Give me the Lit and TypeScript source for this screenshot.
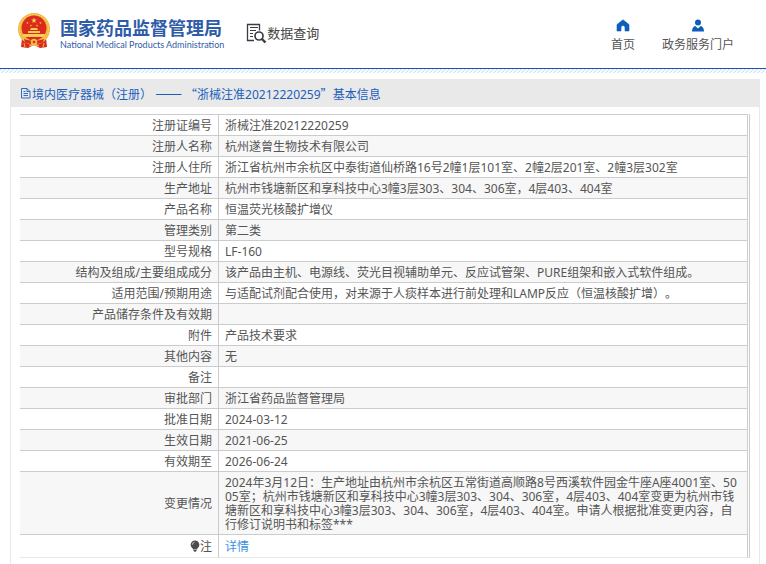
import { LitElement, html, css, svg } from "lit";
import { customElement } from "lit/decorators.js";

interface Row {
  label: string;
  value: string;
}

const rows: Row[] = [
  { label: "注册证编号", value: "浙械注准20212220259" },
  { label: "注册人名称", value: "杭州遂曾生物技术有限公司" },
  { label: "注册人住所", value: "浙江省杭州市余杭区中泰街道仙桥路16号2幢1层101室、2幢2层201室、2幢3层302室" },
  { label: "生产地址", value: "杭州市钱塘新区和享科技中心3幢3层303、304、306室，4层403、404室" },
  { label: "产品名称", value: "恒温荧光核酸扩增仪" },
  { label: "管理类别", value: "第二类" },
  { label: "型号规格", value: "LF-160" },
  { label: "结构及组成/主要组成成分", value: "该产品由主机、电源线、荧光目视辅助单元、反应试管架、PURE组架和嵌入式软件组成。" },
  { label: "适用范围/预期用途", value: "与适配试剂配合使用，对来源于人痰样本进行前处理和LAMP反应（恒温核酸扩增）。" },
  { label: "产品储存条件及有效期", value: "" },
  { label: "附件", value: "产品技术要求" },
  { label: "其他内容", value: "无" },
  { label: "备注", value: "" },
  { label: "审批部门", value: "浙江省药品监督管理局" },
  { label: "批准日期", value: "2024-03-12" },
  { label: "生效日期", value: "2021-06-25" },
  { label: "有效期至", value: "2026-06-24" },
  {
    label: "变更情况",
    value:
      "2024年3月12日：生产地址由杭州市余杭区五常街道高顺路8号西溪软件园金牛座A座4001室、5005室；杭州市钱塘新区和享科技中心3幢3层303、304、306室，4层403、404室变更为杭州市钱塘新区和享科技中心3幢3层303、304、306室，4层403、404室。申请人根据批准变更内容，自行修订说明书和标签***",
  },
];

const star = (cx: number, cy: number, r: number) => {
  const points = Array.from({ length: 10 }, (_, i) => {
    const radius = i % 2 ? r * 0.4 : r;
    const a = (Math.PI / 5) * i - Math.PI / 2;
    return `${(cx + radius * Math.cos(a)).toFixed(2)},${(cy + radius * Math.sin(a)).toFixed(2)}`;
  }).join(" ");
  return svg`<polygon points=${points} fill="#f7d154"/>`;
};

@customElement("app-root")
export class AppRoot extends LitElement {
  static styles = css`
    :host {
      display: block;
      background: #fff;
      color: #555;
      font: 12px/14px "Noto Sans", "Noto Sans CJK SC", sans-serif;
      text-spacing-trim: space-all;
    }
    a {
      color: inherit;
      text-decoration: none;
    }
    svg {
      display: block;
      flex: none;
    }
    .header {
      display: flex;
      align-items: flex-start;
      height: 68px;
      padding: 0 32px 0 17px;
      box-sizing: border-box;
    }
    .brand {
      display: flex;
      gap: 9px;
      padding-top: 12px;
    }
    .names {
      padding-top: 2px;
      color: #2f5ca8;
      white-space: nowrap;
    }
    .cn {
      font: 700 18px/26px "Noto Sans CJK SC", sans-serif;
    }
    .en {
      font: 9px/10px Lato, "Liberation Sans", sans-serif;
    }
    .query {
      display: flex;
      align-items: center;
      margin: 0 0 0 20px;
      padding-top: 22px;
      color: #444;
      font: 400 13px/20px "Noto Sans CJK SC", sans-serif;
      white-space: nowrap;
    }
    .menu {
      display: flex;
      gap: 27px;
      margin-left: auto;
      padding-top: 19px;
    }
    .menu a {
      display: flex;
      flex-direction: column;
      align-items: center;
      gap: 6px;
      white-space: nowrap;
    }
    .rule {
      height: 4px;
      border-top: 1px solid #1c56a5;
      background: linear-gradient(135deg, #dbe9f4 25%, #fff 25% 50%, #dbe9f4 50% 75%, #fff 75%) 0 0 / 4px 4px;
    }
    .panel {
      margin: 6px 6px 0 10px;
      padding-bottom: 6px;
      border: solid #e8e8e8;
      border-width: 0 1px;
    }
    .title {
      display: flex;
      align-items: center;
      gap: 1px;
      margin: 0;
      height: 28px;
      padding-left: 10px;
      background: #e9e9e9;
      color: #1b5fbd;
      font-weight: 400;
      font-size: 12px;
    }
    .wide {
      font-family: "Noto Sans CJK SC", sans-serif;
    }
    .dash {
      font: 16px/14px "Noto Sans CJK SC", sans-serif;
    }
    .sheet {
      margin: 7px 9px 0;
      padding-right: 1px;
      border-right: 1px solid #ccc;
    }
    table {
      width: 100%;
      border-spacing: 0;
      border-top: 1px solid #ccc;
      border-right: 1px solid #ccc;
    }
    th,
    td {
      padding: 4px 6px 2px;
      border-bottom: 1px solid #ccc;
      text-align: left;
      font-weight: 400;
      height: 14px;
      word-break: break-all;
    }
    th {
      width: 186px;
      border-right: 1px solid #ccc;
      text-align: right;
    }
    tr:nth-child(even) {
      background: #f7f7f7;
    }
    .note th,
    .note td {
      height: 16px;
      border-bottom-color: #e8e8e8;
    }
    .note a {
      color: #3c8fe0;
    }
    .bulb {
      display: inline-block;
      vertical-align: -1px;
    }
  `;

  render() {
    return html`
      <header class="header">
        <a class="brand" href="#">
          <svg width="34" height="37" viewBox="0 0 34 37" aria-hidden="true">
            <path d="M5 26l-1 9 7 1 6-3 6 3 7-1-1-9z" fill="#d92c20" />
            <circle cx="17" cy="17" r="16" fill="#eeb33c" />
            <circle cx="17" cy="17" r="14.5" fill="none" stroke="#f8cf62" stroke-width="1.4" stroke-dasharray="2 1" />
            <circle cx="17" cy="16" r="12.4" fill="#dc2a1d" />
            ${star(17, 8.5, 3)}${star(10.5, 11, 1.3)}${star(23.5, 11, 1.3)}${star(14, 13.6, 1.3)}${star(20, 13.6, 1.3)}
            <path d="M13 18l1-2h6l1 2zM11 19h12v2H11zM6 22h22v3H6z" fill="#f7cd58" />
            <path d="M7 27c5 2 15 2 20 0l-1 3c-5 3-13 3-18 0z" fill="#d92c20" />
            <circle cx="17" cy="30" r="3.2" fill="#f2bd45" />
            <circle cx="17" cy="30" r="1.3" fill="#d92c20" />
            <path d="M7 31l1 4M27 31l-1 4M12 34l5-1 5 1" stroke="#f2bd45" fill="none" />
          </svg>
          <div class="names">
            <div class="cn">国家药品监督管理局</div>
            <div class="en">National Medical Products Administration</div>
          </div>
        </a>
        <h1 class="query">
          <svg width="23" height="21" viewBox="0 0 23 21" fill="none" stroke="#3b3b44" aria-hidden="true">
            <path d="M10 18.500H3.500v-16h12v6" stroke-width="1.300" />
            <path d="M6 5.500h8M6 8.500h6M6 11.500h3M6 14.500h3" />
            <circle cx="15" cy="14" r="4" stroke-width="1.700" />
            <path d="M18 17l3.500 3.500" stroke-width="2.400" />
          </svg>
          数据查询
        </h1>
        <nav class="menu">
          <a href="#">
            <svg width="14" height="13" viewBox="0 0 14 13" aria-hidden="true">
              <path d="M7 .8L13 5.600V12H9V8.500a2 2 0 0 0-4 0V12H1V5.600z" fill="#0b5fb8" stroke="#0b5fb8" stroke-width=".6" stroke-linejoin="round" />
            </svg>
            首页
          </a>
          <a href="#">
            <svg width="14" height="13" viewBox="0 0 14 13" fill="#0b5fb8" aria-hidden="true">
              <circle cx="7" cy="3.400" r="3" />
              <path d="M1 12.400c0-3 1.400-5 3.400-5.400L7 9.600 9.600 7c2 .4 3.400 2.400 3.400 5.400z" />
            </svg>
            政务服务门户
          </a>
        </nav>
      </header>
      <div class="rule"></div>
      <main class="panel">
        <h2 class="title">
          <svg width="10" height="12" viewBox="0 0 10 12" fill="none" stroke="#1b5fbd" stroke-width=".9" aria-hidden="true">
            <path d="M.5 1.500h5.500l3 3v6.500H.5zM6 1.500v3h3M2.500 4.500h2M2.500 6.500h4.500M2.500 8.500h4.500" />
          </svg>
          <span>境内医疗器械（注册） <span class="dash">——</span> <span class="wide">“</span>浙械注准20212220259<span class="wide">”</span>基本信息</span>
        </h2>
        <div class="sheet">
          <table>
            <tbody>
              ${rows.map(
                (row) => html`<tr>
                  <th scope="row">${row.label}</th>
                  <td>${row.value}</td>
                </tr>`
              )}
              <tr class="note">
                <th scope="row"><svg class="bulb" width="10" height="12" viewBox="0 0 10 12" aria-hidden="true"><path d="M5 .5a4.300 4.300 0 0 1 2.500 7.800L7 9.500H3L2.500 8.300A4.300 4.300 0 0 1 5 .5zM3.500 10h3v1l-1 .8h-1l-1-.8z" fill="#4c4c4c" /><path d="M2.300 4.800A2.700 2.700 0 0 1 4.500 2.200" fill="none" stroke="#ddd" stroke-width=".8" /></svg>注</th>
                <td><a href="#">详情</a></td>
              </tr>
            </tbody>
          </table>
        </div>
      </main>
    `;
  }
}
